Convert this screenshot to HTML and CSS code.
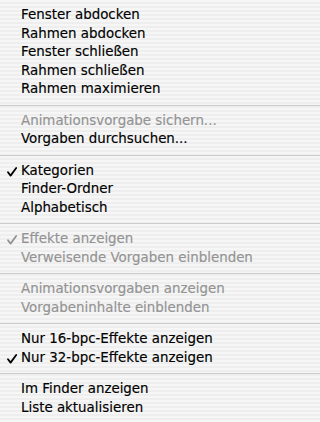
FILE: index.html
```html
<!DOCTYPE html>
<html lang="de">
<head>
<meta charset="utf-8">
<link rel="stylesheet" href="styles.css">
</head>
<body>
<div class="menu">
  <div class="item">Fenster abdocken</div>
  <div class="item">Rahmen abdocken</div>
  <div class="item">Fenster schließen</div>
  <div class="item">Rahmen schließen</div>
  <div class="item">Rahmen maximieren</div>
  <div class="sep"></div>
  <div class="item off">Animationsvorgabe sichern...</div>
  <div class="item">Vorgaben durchsuchen...</div>
  <div class="sep"></div>
  <div class="item"><svg class="check" viewBox="0 0 10 10"><path d="M1 5.2 L3.6 8.6 L9.2 1"/></svg>Kategorien</div>
  <div class="item">Finder-Ordner</div>
  <div class="item">Alphabetisch</div>
  <div class="sep"></div>
  <div class="item off"><svg class="check" viewBox="0 0 10 10"><path d="M1 5.2 L3.6 8.6 L9.2 1"/></svg>Effekte anzeigen</div>
  <div class="item off">Verweisende Vorgaben einblenden</div>
  <div class="sep"></div>
  <div class="item off">Animationsvorgaben anzeigen</div>
  <div class="item off">Vorgabeninhalte einblenden</div>
  <div class="sep"></div>
  <div class="item">Nur 16-bpc-Effekte anzeigen</div>
  <div class="item"><svg class="check" viewBox="0 0 10 10"><path d="M1 5.2 L3.6 8.6 L9.2 1"/></svg>Nur 32-bpc-Effekte anzeigen</div>
  <div class="sep"></div>
  <div class="item">Im Finder anzeigen</div>
  <div class="item">Liste aktualisieren</div>
</div>
</body>
</html>
```

FILE: styles.css
```css
html, body {
  margin: 0;
  padding: 0;
}

body {
  height: 422px;
  overflow: hidden;
  background: repeating-linear-gradient(to bottom, #f6f6f6 0, #f6f6f6 2px, #eeeeee 2px, #eeeeee 4px);
}

.menu {
  display: flex;
  flex-direction: column;
  padding: 6px 0 5px;
  font-family: "DejaVu Sans", "Liberation Sans", sans-serif;
  font-size: 13.4px;
  color: #000;
  -webkit-text-stroke: 0.15px currentColor;
}

.item {
  position: relative;
  height: 18.5px;
  line-height: 18.5px;
  padding-left: 21px;
  white-space: nowrap;
}

.item.off {
  color: #939393;
}

.check {
  position: absolute;
  left: 7px;
  top: 5px;
  width: 10px;
  height: 10px;
  fill: none;
  stroke: currentColor;
  stroke-width: 1.8;
  stroke-linecap: round;
  stroke-linejoin: round;
}

.sep {
  height: 13px;
  display: flex;
  align-items: center;
}

.sep::before {
  content: "";
  flex: 1;
  height: 1px;
  background: #cbcbcb;
}
```
